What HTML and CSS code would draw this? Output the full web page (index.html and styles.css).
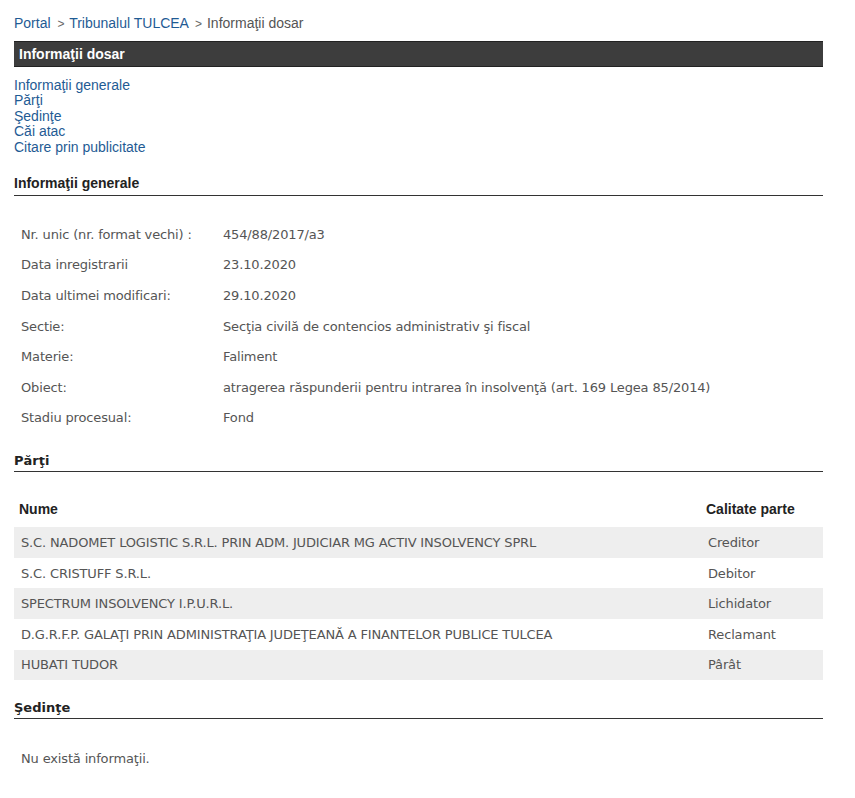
FILE: index.html
```html
<!DOCTYPE html>
<html lang="ro">
<head>
  <meta charset="UTF-8" />
  <title>Informaţii dosar</title>
  <link rel="stylesheet" href="styles.css">
</head>
<body>
  <div class="page">
    <div class="breadcrumb">
      <a href="#">Portal</a>
      <span class="sep">&gt;</span>
      <a href="#">Tribunalul TULCEA</a>
      <span class="sep">&gt;</span>
      <span class="current">Informaţii dosar</span>
    </div>

    <h1 class="title-bar">Informaţii dosar</h1>

    <ul class="toc">
      <li><a href="#generale">Informaţii generale</a></li>
      <li><a href="#parti">Părţi</a></li>
      <li><a href="#sedinte">Şedinţe</a></li>
      <li><a href="#cai">Căi atac</a></li>
      <li><a href="#citare">Citare prin publicitate</a></li>
    </ul>

    <h2 class="section-title arial" id="generale">Informaţii generale</h2>
    <table class="info">
      <tr><td class="label">Nr. unic (nr. format vechi) :</td><td>454/88/2017/a3</td></tr>
      <tr><td class="label">Data inregistrarii</td><td>23.10.2020</td></tr>
      <tr><td class="label">Data ultimei modificari:</td><td>29.10.2020</td></tr>
      <tr><td class="label">Sectie:</td><td>Secţia civilă de contencios administrativ şi fiscal</td></tr>
      <tr><td class="label">Materie:</td><td>Faliment</td></tr>
      <tr><td class="label">Obiect:</td><td>atragerea răspunderii pentru intrarea în insolvenţă (art. 169 Legea 85/2014)</td></tr>
      <tr><td class="label">Stadiu procesual:</td><td>Fond</td></tr>
    </table>

    <h2 class="section-title" id="parti">Părţi</h2>
    <table class="parties">
      <thead>
        <tr><th>Nume</th><th class="role">Calitate parte</th></tr>
      </thead>
      <tbody>
        <tr><td>S.C. NADOMET LOGISTIC S.R.L. PRIN ADM. JUDICIAR MG ACTIV INSOLVENCY SPRL</td><td class="role">Creditor</td></tr>
        <tr><td>S.C. CRISTUFF S.R.L.</td><td class="role">Debitor</td></tr>
        <tr><td>SPECTRUM INSOLVENCY I.P.U.R.L.</td><td class="role">Lichidator</td></tr>
        <tr><td>D.G.R.F.P. GALAŢI PRIN ADMINISTRAŢIA JUDEŢEANĂ A FINANTELOR PUBLICE TULCEA</td><td class="role">Reclamant</td></tr>
        <tr><td>HUBATI TUDOR</td><td class="role">Pârât</td></tr>
      </tbody>
    </table>

    <h2 class="section-title" id="sedinte">Şedinţe</h2>
    <p class="empty">Nu există informaţii.</p>
  </div>
</body>
</html>
```

FILE: styles.css
```css
* {
  margin: 0;
  padding: 0;
  box-sizing: border-box;
}

body {
  background: #fff;
  font-family: "Liberation Sans", Arial, sans-serif;
  font-size: 14px;
  color: #555;
}

.page {
  width: 809px;
  margin-left: 14px;
  padding-top: 15px;
}

a {
  color: #1f5b94;
  text-decoration: none;
}

.breadcrumb {
  font-size: 14px;
  line-height: 16px;
  color: #555;
}

.breadcrumb .sep {
  font-size: 12px;
  margin: 0 1px 0 3px;
  color: #666;
}

.title-bar {
  margin-top: 9px;
  height: 26px;
  background: #3d3d3d;
  border-top: 1px solid #222;
  border-bottom: 1px solid #222;
  color: #fff;
  font-size: 14px;
  font-weight: bold;
  line-height: 24px;
  padding-left: 5px;
}

.toc {
  list-style: none;
  margin-top: 11px;
  font-size: 14px;
  line-height: 15.4px;
}

.section-title {
  margin-top: 20px;
  font-family: Tahoma, "DejaVu Sans", sans-serif;
  font-size: 13px;
  font-weight: bold;
  color: #222;
  padding-bottom: 3px;
  border-bottom: 1px solid #333;
}

.section-title.arial {
  font-family: "Liberation Sans", Arial, sans-serif;
  font-size: 14px;
  padding-bottom: 4px;
}

.info,
.parties,
.empty {
  font-family: Tahoma, "DejaVu Sans", sans-serif;
  font-size: 13px;
  letter-spacing: -0.15px;
  color: #555;
}

.info {
  margin-top: 23px;
  margin-bottom: 15px;
  border-collapse: collapse;
}

.info td {
  height: 30.6px;
  padding: 0 0 0 7px;
  vertical-align: middle;
}

.info td.label {
  width: 202px;
}

.parties {
  width: 100%;
  margin-top: 19px;
  margin-bottom: 15px;
  border-collapse: collapse;
}

.parties th {
  font-family: "Liberation Sans", Arial, sans-serif;
  font-size: 14px;
  font-weight: bold;
  letter-spacing: 0;
  color: #222;
  text-align: left;
  height: 36px;
  padding-left: 5px;
}

.parties td {
  height: 30.6px;
  padding-left: 7px;
}

.parties th.role {
  width: 117px;
  padding-left: 0;
}

.parties td.role {
  padding-left: 2px;
}

.parties tbody tr:nth-child(odd) {
  background: #eeeeee;
}

.empty {
  padding: 32px 0 0 7px;
}
```
